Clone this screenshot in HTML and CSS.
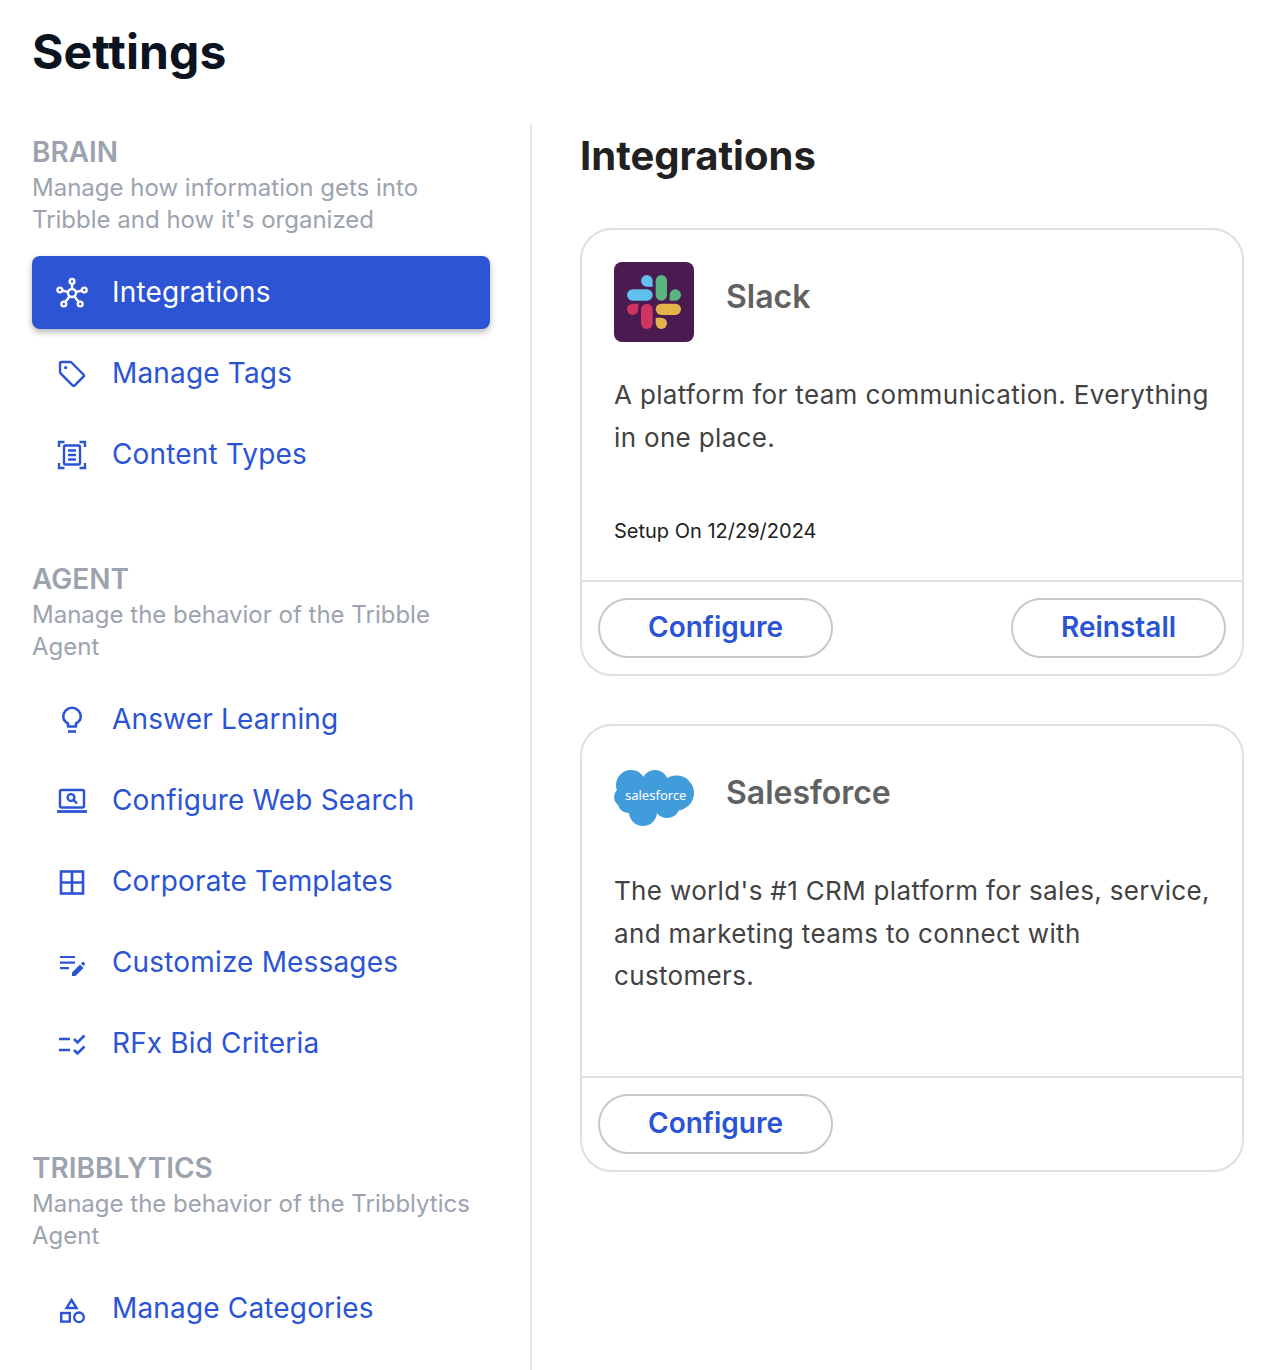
FILE: index.html
```html
<!DOCTYPE html>
<html>
  <head>
    <meta charset="UTF-8">
    <title>Settings</title>
    <link rel="stylesheet" href="styles.css">
  </head>
  <body>
    <h1 class="page-title">Settings</h1>
    <div class="layout">
      <div class="sidebar">
        <div class="section">
          <div class="section-label">BRAIN</div>
          <div class="section-desc">Manage how information gets into Tribble and how it's organized</div>
          <a class="nav-item active">
            <svg class="nav-icon" viewBox="0 0 32 32" fill="none" stroke="currentColor" stroke-width="2.4"><circle cx="16" cy="16" r="4"/><circle cx="16" cy="4.400" r="2.400"/><circle cx="3.800" cy="13" r="2.400"/><circle cx="28.200" cy="13" r="2.400"/><circle cx="7.800" cy="27" r="2.400"/><circle cx="24.200" cy="27" r="2.400"/><path d="M16 6.700v5.300M6.200 13.600l6 1.400M25.800 13.600l-6 1.400M9.300 25l4.400-5.800M22.700 25l-4.400-5.800"/></svg>
            <span class="nav-text">Integrations</span>
          </a>
          <a class="nav-item">
            <svg class="nav-icon" viewBox="0 0 32 32" fill="none" stroke="currentColor" stroke-width="2.400" stroke-linejoin="round"><path d="M4 5.600c0-.9.700-1.600 1.600-1.600h8.600c.5 0 .9.200 1.200.5l12 12c.6.600.6 1.600 0 2.200l-8.600 8.600c-.6.600-1.600.6-2.200 0l-12-12c-.3-.3-.5-.7-.5-1.200z"/><circle cx="9.600" cy="9.600" r="1.600" fill="currentColor" stroke="none"/></svg>
            <span class="nav-text">Manage Tags</span>
          </a>
          <a class="nav-item">
            <svg class="nav-icon" viewBox="0 0 32 32" fill="none" stroke="currentColor" stroke-width="2.400"><path d="M8.500 3H3v5M23.500 3H29v5M8.500 29H3v-5M23.500 29H29v-5"/><rect x="8" y="6.500" width="16" height="19" rx="1.500"/><path d="M12 11.500h8M12 16h8M12 20.500h8"/></svg>
            <span class="nav-text">Content Types</span>
          </a>
        </div>
        <div class="section">
          <div class="section-label">AGENT</div>
          <div class="section-desc">Manage the behavior of the Tribble Agent</div>
          <a class="nav-item">
            <svg class="nav-icon" viewBox="0 0 32 32" fill="none" stroke="currentColor" stroke-width="2.600"><path d="M12 22.500v-3c-2.900-1.500-4.700-3.900-4.700-7a8.700 8.700 0 0 1 17.400 0c0 3.100-1.800 5.500-4.700 7v3z" stroke-linejoin="round"/><path d="M12 27.500h8"/></svg>
            <span class="nav-text">Answer Learning</span>
          </a>
          <a class="nav-item">
            <svg class="nav-icon" viewBox="0 0 32 32" fill="none" stroke="currentColor" stroke-width="2.400"><rect x="4" y="5" width="24" height="17.500" rx="1.500"/><path d="M1 26.500h30" stroke-width="2.800"/><circle cx="15" cy="12.500" r="3.400"/><path d="M17.500 15l3.500 3.500"/></svg>
            <span class="nav-text">Configure Web Search</span>
          </a>
          <a class="nav-item">
            <svg class="nav-icon" viewBox="0 0 32 32" fill="none" stroke="currentColor" stroke-width="2.600"><rect x="5" y="5.500" width="22" height="22"/><path d="M16 5.500v22M5 16.500h22"/></svg>
            <span class="nav-text">Corporate Templates</span>
          </a>
          <a class="nav-item">
            <svg class="nav-icon" viewBox="0 0 32 32" fill="none" stroke="currentColor" stroke-width="2.200"><path d="M4 10h15M4 15.700h15M4 21.200h9"/><path d="M16 29v-3.500l8-8 3.500 3.500-8 8zM25 16.400l1.300-1.300a1 1 0 0 1 1.400 0l1.100 1.100a1 1 0 0 1 0 1.400l-1.300 1.300z" fill="currentColor" stroke="none"/></svg>
            <span class="nav-text">Customize Messages</span>
          </a>
          <a class="nav-item">
            <svg class="nav-icon" viewBox="0 0 32 32" fill="none" stroke="currentColor" stroke-width="2.600"><path d="M3 11h11M3 22h11"/><path d="M18 11l3.500 3.500 7-7M18 22l3.500 3.500 7-7"/></svg>
            <span class="nav-text">RFx Bid Criteria</span>
          </a>
        </div>
        <div class="section">
          <div class="section-label">TRIBBLYTICS</div>
          <div class="section-desc">Manage the behavior of the Tribblytics Agent</div>
          <a class="nav-item">
            <svg class="nav-icon" viewBox="0 0 32 32" fill="none" stroke="currentColor" stroke-width="2.400"><path d="M15.500 7l5 8h-10z"/><rect x="5.200" y="20" width="8.600" height="8.600"/><circle cx="23" cy="24.300" r="4.800"/></svg>
            <span class="nav-text">Manage Categories</span>
          </a>
        </div>
      </div>
      <div class="content">
        <h2 class="content-title">Integrations</h2>
        <div class="card">
          <div class="card-body">
            <div class="card-head">
              <svg class="card-logo" viewBox="0 0 80 80">
                <rect width="80" height="80" rx="8" fill="#4a1a50"/>
                <path d="M32.900 13a5.850 5.850 0 0 0 0 11.700h5.800v-5.850A5.850 5.850 0 0 0 32.900 13z" fill="#61c0ec"/>
                <rect x="13" y="27.300" width="25.700" height="11.400" rx="5.700" fill="#61c0ec"/>
                <rect x="41.700" y="13" width="11.300" height="25.700" rx="5.650" fill="#5ab57f"/>
                <path d="M67 33a5.650 5.650 0 0 0-11.300 0v5.700h5.650A5.650 5.650 0 0 0 67 33z" fill="#5ab57f"/>
                <path d="M13 47.350a5.650 5.650 0 0 0 11.300 0V41.700h-5.650A5.650 5.650 0 0 0 13 47.350z" fill="#ce3561"/>
                <rect x="27" y="41.700" width="11.700" height="25.300" rx="5.800" fill="#ce3561"/>
                <rect x="41.700" y="41.700" width="25.300" height="11.300" rx="5.650" fill="#e3b44a"/>
                <path d="M41.700 55.700v5.650a5.650 5.650 0 1 0 5.650-5.650z" fill="#e3b44a"/>
              </svg>
              <span class="card-name">Slack</span>
            </div>
            <p class="card-desc">A platform for team communication. Everything in one place.</p>
            <div class="card-meta">Setup On 12/29/2024</div>
          </div>
          <div class="card-foot">
            <button class="pill pill-config">Configure</button>
            <button class="pill pill-reinstall">Reinstall</button>
          </div>
        </div>
        <div class="card">
          <div class="card-body">
            <div class="card-head">
              <div class="sf-logo">
                <svg viewBox="0 0 80 56">
                  <g fill="#419cdb"><circle cx="17" cy="15" r="15"/><circle cx="41" cy="13" r="13"/><circle cx="62.500" cy="23" r="17.500"/><circle cx="29" cy="42" r="14"/><circle cx="10" cy="27" r="10"/><circle cx="14" cy="33" r="10"/><circle cx="53" cy="35" r="13"/><rect x="10" y="12" width="50" height="26"/></g>
                </svg>
                <span class="sf-text">salesforce</span>
              </div>
              <span class="card-name">Salesforce</span>
            </div>
            <p class="card-desc">The world's #1 CRM platform for sales, service, and marketing teams to connect with customers.</p>
          </div>
          <div class="card-foot">
            <button class="pill pill-config">Configure</button>
          </div>
        </div>
      </div>
    </div>
  </body>
</html>
```

FILE: styles.css
```css
html, body {
  height: 100%;
}
body {
  margin: 0;
  overflow: hidden;
  background: #fff;
  font-family: Inter, sans-serif;
  display: flex;
  flex-direction: column;
}
.page-title {
  margin: 0;
  padding: 22px 32px 0;
  font-size: 48px;
  line-height: 60px;
  font-weight: 700;
  letter-spacing: 0.12px;
  color: #0b1220;
  height: 102px;
  flex: none;
}
.layout {
  display: flex;
  flex: 1;
  min-height: 0;
}
.sidebar {
  width: 458px;
  margin-left: 32px;
  padding: 12px 40px 0 0;
  border-right: 2px solid #e5e7eb;
  flex: none;
}
.section {
  margin-bottom: 72px;
}
.section-label {
  font-size: 28px;
  line-height: 32px;
  font-weight: 600;
  color: #9ca3af;
}
.section-desc {
  font-size: 24px;
  line-height: 32px;
  color: #9ca3af;
  margin-top: 4px;
  margin-bottom: 20px;
}
.nav-item {
  display: flex;
  align-items: center;
  gap: 24px;
  height: 73px;
  margin-bottom: 8px;
  padding-left: 24px;
  border-radius: 8px;
  font-size: 28px;
  letter-spacing: 0.16px;
  color: #2b54d5;
}
.nav-item.active {
  background: #2c54d4;
  color: #fff;
  box-shadow: 0 3px 6px rgba(0, 0, 0, 0.3);
}
.nav-icon {
  width: 32px;
  height: 32px;
  flex: none;
}
.nav-text {
  padding-bottom: 2px;
}
.content {
  flex: 1;
  padding: 0 30px 0 48px;
}
.content-title {
  margin: 0;
  padding-top: 8px;
  font-size: 40px;
  line-height: 48px;
  font-weight: 700;
  color: #212121;
  margin-bottom: 48px;
}
.card {
  height: 448px;
  box-sizing: border-box;
  border: 2px solid #e0e0e0;
  border-radius: 32px;
  display: flex;
  flex-direction: column;
  margin-bottom: 48px;
}
.card-body {
  flex: 1;
  padding: 32px 32px 0;
}
.card-head {
  display: flex;
  align-items: center;
  gap: 32px;
  height: 80px;
}
.card-logo {
  width: 80px;
  height: 80px;
  flex: none;
}
.sf-logo {
  width: 80px;
  height: 56px;
  position: relative;
  flex: none;
}
.sf-logo svg {
  width: 80px;
  height: 56px;
  display: block;
}
.sf-text {
  position: absolute;
  left: 11px;
  top: 17px;
  font-size: 13px;
  line-height: 16px;
  color: #fff;
  font-family: "Noto Sans", sans-serif;
  font-variant-ligatures: none;
}
.card-name {
  font-size: 32px;
  font-weight: 600;
  color: #616161;
  margin-bottom: 11px;
}
.card-desc {
  margin: 32px 0 0;
  font-size: 26px;
  line-height: 42.7px;
  letter-spacing: 0.34px;
  color: #424242;
}
.card-meta {
  margin-top: 57.6px;
  font-size: 20px;
  line-height: 28px;
  color: #212121;
}
.card-foot {
  height: 94px;
  box-sizing: border-box;
  border-top: 2px solid #e0e0e0;
  padding: 16px;
  display: flex;
  justify-content: space-between;
  flex: none;
}
.pill {
  height: 60px;
  border: 2px solid #c8c8cc;
  border-radius: 30px;
  background: #fff;
  font-family: Inter, sans-serif;
  font-size: 28px;
  font-weight: 600;
  color: #2b54d5;
  padding: 0 0 2px;
}
.pill-config {
  width: 235px;
}
.pill-reinstall {
  width: 215px;
}
```
